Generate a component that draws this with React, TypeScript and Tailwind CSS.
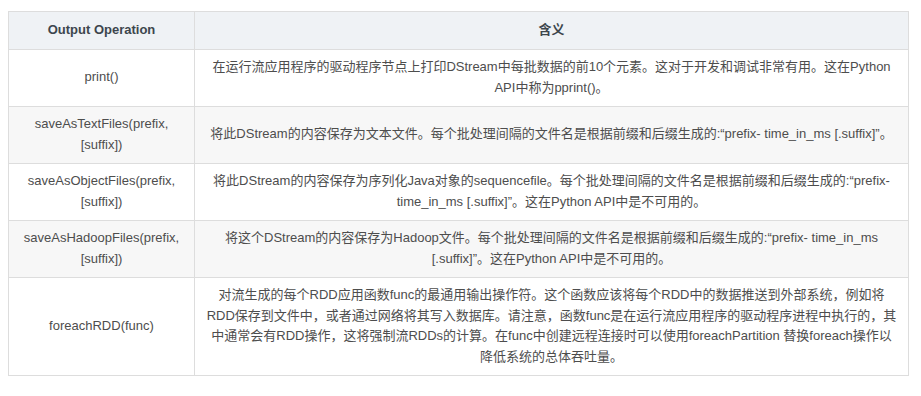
const rows: { op: string; desc: string }[] = [
  {
    op: 'print()',
    desc: '在运行流应用程序的驱动程序节点上打印DStream中每批数据的前10个元素。这对于开发和调试非常有用。这在Python API中称为pprint()。',
  },
  {
    op: 'saveAsTextFiles(prefix, [suffix])',
    desc: '将此DStream的内容保存为文本文件。每个批处理间隔的文件名是根据前缀和后缀生成的:“prefix- time_in_ms [.suffix]”。',
  },
  {
    op: 'saveAsObjectFiles(prefix, [suffix])',
    desc: '将此DStream的内容保存为序列化Java对象的sequencefile。每个批处理间隔的文件名是根据前缀和后缀生成的:“prefix- time_in_ms [.suffix]”。这在Python API中是不可用的。',
  },
  {
    op: 'saveAsHadoopFiles(prefix, [suffix])',
    desc: '将这个DStream的内容保存为Hadoop文件。每个批处理间隔的文件名是根据前缀和后缀生成的:“prefix- time_in_ms [.suffix]”。这在Python API中是不可用的。',
  },
  {
    op: 'foreachRDD(func)',
    desc: '对流生成的每个RDD应用函数func的最通用输出操作符。这个函数应该将每个RDD中的数据推送到外部系统，例如将RDD保存到文件中，或者通过网络将其写入数据库。请注意，函数func是在运行流应用程序的驱动程序进程中执行的，其中通常会有RDD操作，这将强制流RDDs的计算。在func中创建远程连接时可以使用foreachPartition 替换foreach操作以降低系统的总体吞吐量。',
  },
];

export default function App() {
  return (
    <div className="w-[921px] h-[396px] bg-white pt-[11px] pl-[8px] font-['Liberation_Sans','Noto_Sans_CJK_SC',sans-serif] text-[13px] leading-[20.5px]">
      <table className="w-[901px] border-collapse table-fixed">
        <colgroup>
          <col className="w-[186px]" />
          <col />
        </colgroup>
        <thead>
          <tr className="bg-[#eff2f5] text-[#3d464d]">
            <th className="border border-[#dddddd] px-[10px] py-[8px] font-bold text-center">Output Operation</th>
            <th className="border border-[#dddddd] px-[10px] py-[8px] font-bold text-center">含义</th>
          </tr>
        </thead>
        <tbody>
          {rows.map((r, i) => (
            <tr key={r.op} className={i % 2 === 1 ? 'bg-[#f7f7f7]' : 'bg-white'}>
              <td className="border border-[#dddddd] px-[10px] py-[7.5px] text-center align-middle text-[#4d4d4d]">{r.op}</td>
              <td className="border border-[#dddddd] px-[10px] py-[7.5px] text-center align-middle text-[#4d4d4d]">{r.desc}</td>
            </tr>
          ))}
        </tbody>
      </table>
    </div>
  );
}
